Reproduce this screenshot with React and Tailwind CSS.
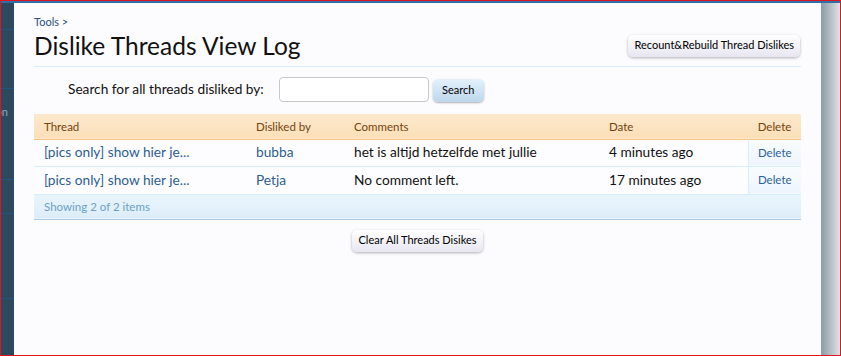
import React from "react";

const rows = [
  { thread: "[pics only] show hier je...", user: "bubba", comment: "het is altijd hetzelfde met jullie", date: "4 minutes ago", h: "h-[27px]" },
  { thread: "[pics only] show hier je...", user: "Petja", comment: "No comment left.", date: "17 minutes ago", h: "h-[28px]" },
];

function Sidebar() {
  return (
    <aside className="w-[13px] shrink-0 bg-[#2d495d] flex flex-col overflow-hidden">
      <div className="h-[26px]" />
      <div className="h-px bg-[#1f5684]" />
      <div className="h-[58px]" />
      <div className="h-px bg-[#1f5684]" />
      <div className="h-[90px] pt-[17px] pr-[6px] flex justify-end">
        <span className="text-[11px] leading-[12px] text-[#8fa6b8] whitespace-nowrap">on</span>
      </div>
      <div className="h-px bg-[#1f5684]" />
      <div className="h-[33px]" />
      <div className="h-px bg-[#1f5684]" />
      <div className="h-[84px]" />
      <div className="h-px bg-[#1f5684]" />
    </aside>
  );
}

function App() {
  return (
    <div
      className="w-[841px] h-[356px] border border-[#e0141e] flex flex-col overflow-hidden bg-[#fcfcff]"
      style={{ fontFamily: "Lato, 'Liberation Sans', sans-serif" }}
    >
      <div className="h-[2px] bg-[#2f6ea6] shrink-0" />
      <div className="flex flex-1 min-h-0">
        <Sidebar />

        <main className="flex-1 bg-[#fcfcff] px-[20px] pt-[13px] text-black">
          {/* breadcrumb */}
          <div className="text-[11px] leading-[12px] text-[#2b4f7a]">Tools &gt;</div>

          {/* title row */}
          <div className="flex items-center justify-between pb-[3px] border-b border-[#d7edfc]">
            <h1 className="text-[24.5px] leading-[34px] text-[#111] pt-[1px]">Dislike Threads View Log</h1>
            <button className="h-[22px] px-[6px] mr-px rounded-[5px] text-[11px] text-black bg-gradient-to-b from-white to-[#e7e6f1] shadow-[0_1px_3px_rgba(0,0,0,0.3)]">
              Recount&amp;Rebuild Thread Dislikes
            </button>
          </div>

          {/* search */}
          <div className="flex items-center pl-[34px] pt-[10px]">
            <span className="text-[13.7px] text-[#111]">Search for all threads disliked by:</span>
            <input className="ml-[15px] w-[150px] h-[25px] rounded-[4px] border border-[#c8c8c8] bg-white" />
            <button className="ml-[4px] mt-[2px] w-[51px] h-[23px] rounded-[5px] text-[11px] text-black bg-gradient-to-b from-[#e4f1fb] to-[#bcd7ec] shadow-[0_1px_2px_rgba(0,0,0,0.3)]">
              Search
            </button>
          </div>

          {/* table */}
          <table className="mt-[12px] w-full border-collapse table-fixed">
            <colgroup>
              <col className="w-[212px]" />
              <col className="w-[98px]" />
              <col className="w-[255px]" />
              <col className="w-[149px]" />
              <col className="w-[53px]" />
            </colgroup>
            <thead>
              <tr className="h-[25px] bg-gradient-to-b from-[#fde9cd] to-[#fbdfb8] border-b border-[#f5c37e] text-[11.5px] text-[#73430f]">
                <th className="text-left font-normal pl-[10px]">Thread</th>
                <th className="text-left font-normal pl-[10px]">Disliked by</th>
                <th className="text-left font-normal pl-[10px]">Comments</th>
                <th className="text-left font-normal pl-[10px]">Date</th>
                <th className="text-center font-normal">Delete</th>
              </tr>
            </thead>
            <tbody>
              {rows.map((r, i) => (
                <tr key={i} className={`${r.h} bg-[#fdfdff] border-b border-[#d7edfc] text-[13.7px]`}>
                  <td className="pl-[10px] text-[#2b5d92] whitespace-nowrap">{r.thread}</td>
                  <td className="pl-[10px] text-[#2b5d92]">{r.user}</td>
                  <td className="pl-[10px] text-[#111] whitespace-nowrap">{r.comment}</td>
                  <td className="pl-[10px] text-[#111]">{r.date}</td>
                  <td className="text-center text-[11.5px] text-[#2e5f98] border-l border-[#d7edfc] bg-gradient-to-b from-[#f9fcff] to-[#edf5fc]">
                    Delete
                  </td>
                </tr>
              ))}
              <tr className="h-[25px] bg-gradient-to-b from-[#eaf5fc] to-[#dcedf9] border-b border-[#a9cbe3]">
                <td colSpan={5} className="pl-[10px] text-[11.5px] text-[#6d9fc6]">Showing 2 of 2 items</td>
              </tr>
            </tbody>
          </table>

          {/* clear */}
          <div className="flex justify-center pt-[10px]">
            <button className="h-[22px] px-[6px] rounded-[5px] text-[11px] text-black bg-gradient-to-b from-white to-[#e7e6f1] shadow-[0_1px_3px_rgba(0,0,0,0.3)]">
              Clear All Threads Disikes
            </button>
          </div>
        </main>

        <div className="w-[19px] shrink-0 bg-gradient-to-r from-[#8b9aa5] to-[#dfe3e6]" />
      </div>
    </div>
  );
}

export default App;
